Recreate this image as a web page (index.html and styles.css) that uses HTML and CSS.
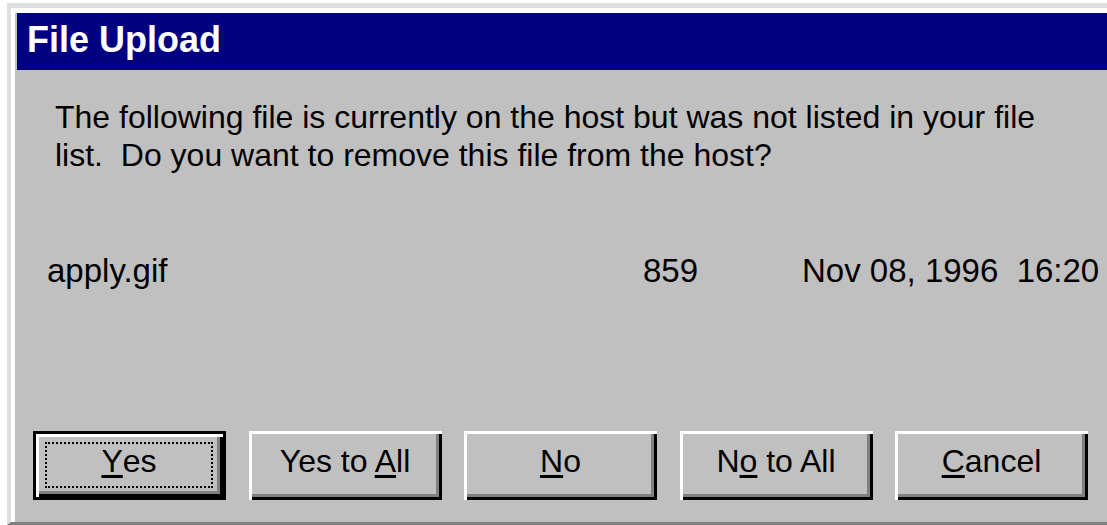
FILE: index.html
```html
<!DOCTYPE html>
<html lang="en">
<head>
<meta charset="utf-8">
<title>File Upload</title>
<link rel="stylesheet" href="styles.css">
</head>
<body>
<div class="window">
  <div class="frame">
    <div class="titlebar">File Upload</div>
    <div class="content">
      <p class="message">The following file is currently on the host but was not listed in your file list.&nbsp; Do you want to remove this file from the host?</p>
      <div class="file-row">
        <span class="file-name">apply.gif</span>
        <span class="file-size">859</span>
        <span class="file-date">Nov 08, 1996  16:20</span>
      </div>
      <div class="buttons">
        <button class="btn default"><span class="focus"><u>Y</u>es</span></button>
        <button class="btn"><span class="label">Yes to <u>A</u>ll</span></button>
        <button class="btn"><span class="label"><u>N</u>o</span></button>
        <button class="btn"><span class="label">N<u>o</u> to All</span></button>
        <button class="btn"><span class="label"><u>C</u>ancel</span></button>
      </div>
    </div>
  </div>
</div>
</body>
</html>
```
FILE: styles.css
```css
html, body {
  margin: 0;
  padding: 0;
  background: #ffffff;
}

body {
  width: 1107px;
  height: 525px;
  overflow: hidden;
  font-family: "Liberation Sans", Arial, sans-serif;
  color: #000;
}

.window {
  margin: 3px 0 0 7px;
  border-top: 5px solid #dfdfdf;
  border-left: 4px solid #dfdfdf;
  border-bottom: 3px solid #808080;
}

.frame {
  border-top: 5px solid #ffffff;
  border-left: 4px solid #ffffff;
  background: #c0c0c0;
  height: 509px;
  display: flex;
  flex-direction: column;
}

.titlebar {
  margin-left: 2px;
  height: 57px;
  box-sizing: border-box;
  padding: 0 0 3px 10px;
  line-height: 54px;
  background: #000080;
  color: #ffffff;
  font-weight: bold;
  font-size: 36px;
  white-space: nowrap;
}

.content {
  flex: 1;
  display: flex;
  flex-direction: column;
}

.message {
  margin: 28px 0 0 40px;
  width: 1000px;
  font-size: 32px;
  line-height: 38px;
}

/* file details: name, size (right aligned), timestamp */
.file-row {
  margin-top: 78px;
  display: flex;
  font-size: 33px;
  line-height: 38px;
  white-space: pre;
}

.file-name {
  margin-left: 32px;
  width: 596px;
}

.file-size {
  width: 55px;
  text-align: right;
}

.file-date {
  margin-left: 104px;
}

.buttons {
  margin-top: auto;
  margin-bottom: 22px;
  margin-left: 18px;
  display: flex;
  gap: 22.5px;
}

.btn {
  width: 193px;
  height: 69px;
  padding: 0;
  margin: 0;
  border: none;
  background: #c0c0c0;
  box-shadow: inset 3px 3px 0 #ffffff, inset -3px -3px 0 #000000, inset -6px -6px 0 #808080;
  font-family: inherit;
  font-size: 32px;
  color: #000;
  display: flex;
  align-items: center;
  justify-content: center;
}

.btn .label {
  padding-bottom: 8px;
}

.btn.default {
  border: 3px solid #000;
  align-items: stretch;
  justify-content: stretch;
}

.focus {
  flex: 1;
  margin: 8px 10px 9px 9px;
  border: 2px dotted #000;
  display: flex;
  align-items: center;
  justify-content: center;
  padding-bottom: 8px;
}

u {
  text-decoration-thickness: 3px;
  text-underline-offset: 3px;
}
```
